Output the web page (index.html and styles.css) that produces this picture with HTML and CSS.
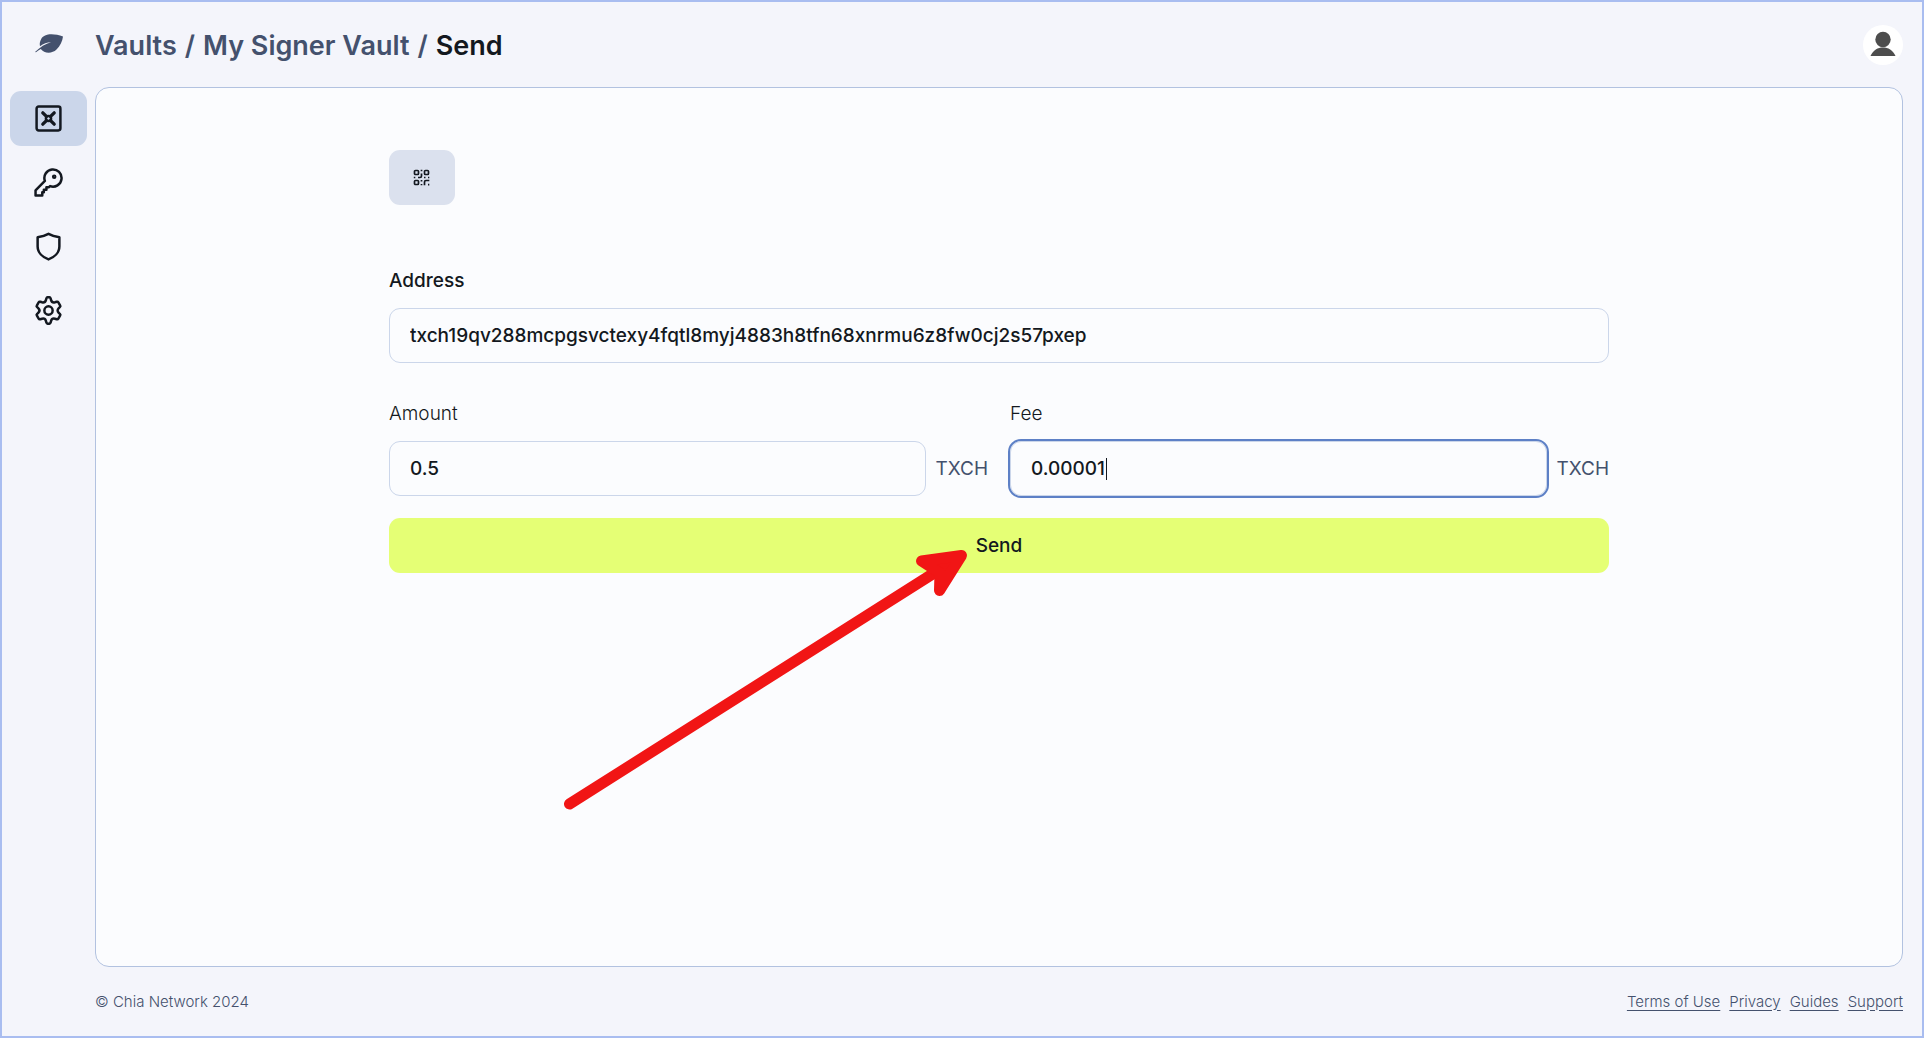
FILE: index.html
```html
<!DOCTYPE html>
<html lang="en">
<head>
    <meta charset="UTF-8">
    <meta name="viewport" content="width=device-width, initial-scale=1.0">
    <title>Send - My Signer Vault</title>
    <link rel="stylesheet" href="styles.css">
</head>
<body>
    <header class="header">
        <a href="#" class="logo" aria-label="Home">
            <svg width="28" height="22" viewBox="0 0 28 22" fill="currentColor">
                <path d="M28 2.500C19-.5 9-1 6 5.500C4.700 8 4.500 10 5 12.200C8.500 9.500 12 8.300 16 8.200C10.500 9.800 5 13 0 18L1 18.300C2.500 17 4 16 5.800 15C9 19.500 17 20 21.500 15.500C25 12 27.500 7 28 2.500Z"/>
            </svg>
        </a>
        <nav class="breadcrumb" aria-label="Breadcrumb">
            <a href="#">Vaults</a>
            <span>/</span>
            <a href="#">My Signer Vault</a>
            <span>/</span>
            <span class="current">Send</span>
        </nav>
        <button class="avatar" type="button" aria-label="Account">
            <svg width="26" height="28" viewBox="0 0 26 28" fill="currentColor">
                <circle cx="13" cy="8.500" r="7.700"/>
                <path d="M.5 25C3 19 8 16.500 13 16.500S23 19 25.500 25Z"/>
            </svg>
        </button>
    </header>

    <div class="layout">
        <nav class="sidebar" aria-label="Main">
            <a href="#" class="side-link active" aria-label="Vaults">
                <svg class="icon" viewBox="0 0 28 28">
                    <rect x="2.500" y="2.500" width="23" height="23" rx="2"/>
                    <circle cx="14" cy="14" r="2.500"/>
                    <path d="M8.500 8.500L12 12M19.500 8.500L16 12M8.500 19.500L12 16M19.500 19.500L16 16" stroke-width="3.200"/>
                </svg>
            </a>
            <a href="#" class="side-link" aria-label="Keys">
                <svg class="icon" viewBox="0 0 28 28">
                    <path d="M10.500 12.500A8.300 8.300 0 1 1 15.500 17.500L14.500 18.500H12V21H9.500V23.500H8V26.500H1.500V21.500Z"/>
                    <circle cx="19.500" cy="8.500" r="1"/>
                </svg>
            </a>
            <a href="#" class="side-link" aria-label="Security">
                <svg class="icon" viewBox="0 0 28 28">
                    <path d="M14 1.800C17.500 3.700 21 4.500 24.500 5V14C24.500 20 19.500 24.500 14 26.500C8.500 24.500 3.500 20 3.500 14V5C7 4.500 10.500 3.700 14 1.800Z"/>
                </svg>
            </a>
            <a href="#" class="side-link" aria-label="Settings">
                <svg class="icon" viewBox="0 0 28 28">
                    <circle cx="14" cy="14" r="4"/>
                    <path d="M11.500 4L12 2.200C12.200 1.600 12.500 1.300 13 1.300H15C15.500 1.300 15.800 1.600 16 2.200L16.500 4C17 5.700 18.500 6.500 20.200 6.100L22 5.600C22.700 5.400 23.200 5.600 23.500 6.100L25.300 9.200C25.600 9.700 25.500 10.200 25 10.600L23.700 12C22.500 13.200 22.500 14.800 23.700 16L25 17.400C25.500 17.800 25.600 18.300 25.300 18.800L23.500 21.900C23.200 22.400 22.700 22.600 22 22.400L20.200 21.900C18.500 21.500 17 22.300 16.500 24L16 25.800C15.800 26.400 15.500 26.700 15 26.700H13C12.500 26.700 12.200 26.400 12 25.800L11.500 24C11 22.300 9.500 21.500 7.800 21.900L6 22.400C5.300 22.600 4.800 22.400 4.500 21.900L2.700 18.800C2.400 18.300 2.500 17.800 3 17.400L4.300 16C5.500 14.800 5.500 13.200 4.300 12L3 10.600C2.500 10.200 2.400 9.700 2.700 9.200L4.500 6.100C4.800 5.600 5.300 5.400 6 5.600L7.800 6.100C9.500 6.500 11 5.700 11.500 4Z"/>
                </svg>
            </a>
        </nav>

        <main class="panel">
            <form class="send-form">
                <button class="btn btn-scan" type="button" aria-label="Scan QR code">
                    <svg width="18" height="18" viewBox="0 0 18 18" fill="none" stroke="currentColor" stroke-width="1.700">
                        <rect x="1.500" y="1.500" width="4" height="4" rx="1"/>
                        <rect x="11.500" y="1.500" width="4" height="4" rx="1"/>
                        <rect x="1.500" y="11.500" width="4" height="4" rx="1"/>
                        <path d="M8.500 .8V2.300M8.500 4.500V7Q8.500 8.500 7 8.500H5M.8 8.500H2.300M11 8.500H12.500M15 8.500H16.300M8.500 11V12.500M8.500 15V16.300M11.500 16.300V13Q11.500 11.500 13 11.500H16.300M15 15.700H16.300"/>
                    </svg>
                </button>

                <div class="field">
                    <label for="address" class="strong">Address</label>
                    <input type="text" id="address" value="txch19qv288mcpgsvctexy4fqtl8myj4883h8tfn68xnrmu6z8fw0cj2s57pxep">
                </div>

                <div class="field-row">
                    <div class="field">
                        <label for="amount">Amount</label>
                        <div class="input-group">
                            <input type="text" id="amount" value="0.5">
                            <span class="unit">TXCH</span>
                        </div>
                    </div>
                    <div class="field">
                        <label for="fee">Fee</label>
                        <div class="input-group">
                            <input type="text" id="fee" class="focused" value="0.00001">
                            <span class="caret"></span>
                            <span class="unit">TXCH</span>
                        </div>
                    </div>
                </div>

                <div class="submit">
                    <button class="btn btn-primary" type="submit">Send</button>
                    <svg class="arrow" width="460" height="300" viewBox="0 0 460 300" fill="#f11515" stroke="#f11515" stroke-width="11" stroke-linecap="round" stroke-linejoin="round">
                        <path d="M29.500 274L402 38"/>
                        <path d="M421.500 25.500L381.500 31L400 43L399.500 60.500Z"/>
                    </svg>
                </div>
            </form>
        </main>
    </div>

    <footer class="footer">
        <span>© Chia Network 2024</span>
        <nav class="footer-links" aria-label="Footer">
            <a href="#">Terms of Use</a>
            <a href="#">Privacy</a>
            <a href="#">Guides</a>
            <a href="#">Support</a>
        </nav>
    </footer>
</body>
</html>
```
FILE: styles.css
```css
* {
    box-sizing: border-box;
}
body {
    display: flex;
    flex-direction: column;
    min-height: 100vh;
    margin: 0;
    border: 2px solid #a9bdf0;
    background-color: #f4f5fb;
    color: #131820;
    font-family: 'Inter', sans-serif;
    font-size: 19px;
    line-height: 28px;
}
a {
    color: inherit;
    text-decoration: none;
}
svg {
    display: block;
}
.header {
    display: flex;
    align-items: center;
    height: 85px;
    padding: 0 19px 0 8px;
}
.logo {
    display: flex;
    justify-content: center;
    width: 77px;
    margin-right: 8px;
    color: #44516d;
}
.breadcrumb {
    display: flex;
    gap: 8px;
    flex: 1;
    padding-top: 2px;
    color: #44516d;
    font-size: 27px;
    font-weight: 600;
    line-height: 36px;
}
.breadcrumb .current {
    color: #131820;
}
.avatar {
    display: flex;
    justify-content: center;
    align-items: center;
    width: 40px;
    height: 40px;
    padding: 0;
    border: none;
    border-radius: 50%;
    background-color: #fff;
    color: #4d4d4d;
}
.layout {
    display: flex;
    flex: 1;
    gap: 8px;
    padding: 0 19px 0 8px;
}
.sidebar {
    display: flex;
    flex-direction: column;
    gap: 9px;
    width: 77px;
    padding-top: 4px;
}
.side-link {
    display: flex;
    justify-content: center;
    align-items: center;
    height: 55px;
    padding: 0 1px 1px 0;
    border-radius: 11px;
}
.side-link.active {
    background-color: #cbd6ea;
}
.icon {
    width: 29px;
    height: 29px;
    fill: none;
    stroke: currentColor;
    stroke-width: 2.4;
    stroke-linecap: round;
    stroke-linejoin: round;
}
.panel {
    flex: 1;
    padding: 62px 36px;
    border: 1px solid #b2c2e0;
    border-radius: 14px;
    background-color: #fbfcfe;
}
.send-form {
    max-width: 1220px;
    margin: 0 auto;
}
.btn {
    display: flex;
    justify-content: center;
    align-items: center;
    height: 55px;
    border: none;
    border-radius: 11px;
    color: #131820;
    font: inherit;
    font-weight: 500;
    cursor: pointer;
}
.btn-scan {
    width: 66px;
    margin-bottom: 62px;
    background-color: #dbe1ee;
}
.btn-primary {
    width: 100%;
    background-color: #e5ff75;
}
.field {
    flex: 1;
    margin-bottom: 37px;
}
.field label {
    display: block;
    margin-bottom: 13px;
    font-weight: 300;
}
.field label.strong {
    font-weight: 500;
}
.field input {
    flex: 1;
    width: 100%;
    min-width: 0;
    height: 55px;
    padding: 0 20px;
    border: 1px solid #cbd6ea;
    border-radius: 11px;
    background-color: #fbfcfe;
    color: #131820;
    font: inherit;
    font-weight: 500;
}
.field input.focused {
    outline: 2px solid #5d80c6;
    outline-offset: 0;
}
.field-row {
    display: flex;
    gap: 22px;
}
.field-row .field {
    margin-bottom: 22px;
}
.input-group {
    display: flex;
    align-items: center;
    gap: 9px;
    position: relative;
}
.caret {
    position: absolute;
    left: 96px;
    width: 1px;
    height: 22px;
    background-color: #131820;
}
.unit {
    color: #44516d;
}
.submit {
    position: relative;
}
.arrow {
    position: absolute;
    top: 12px;
    left: calc(50% - 459px);
    pointer-events: none;
}
.footer {
    display: flex;
    justify-content: space-between;
    align-items: center;
    height: 69px;
    padding: 0 19px 0 93px;
    color: #44516d;
    font-size: 15px;
    font-weight: 300;
}
.footer-links {
    display: flex;
    gap: 9px;
}
.footer-links a {
    text-decoration: underline;
    text-underline-offset: 3px;
}
```
